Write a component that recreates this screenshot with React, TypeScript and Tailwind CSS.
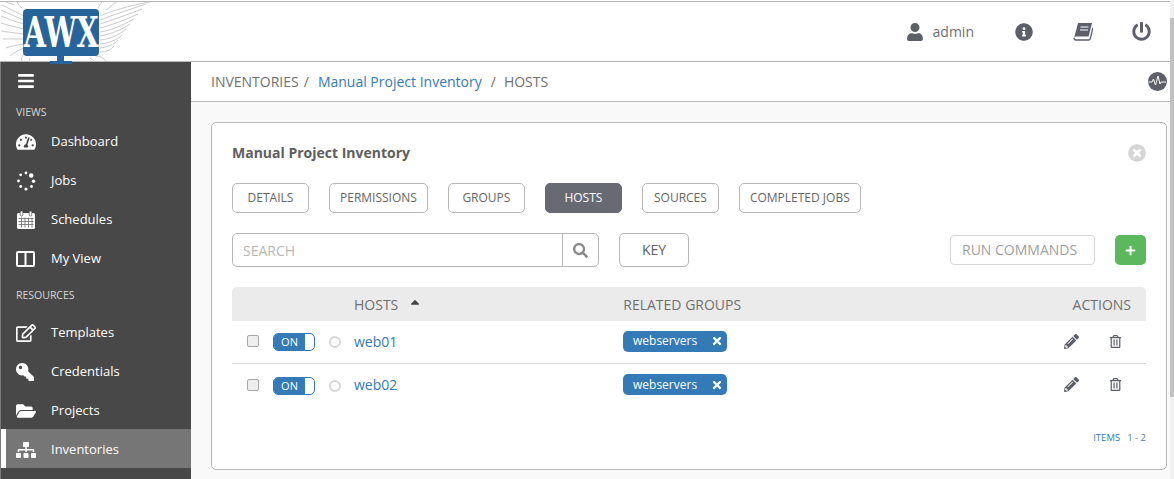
import {
  FaBars,
  FaTachometerAlt,
  FaRegEdit,
  FaKey,
  FaFolderOpen,
  FaSitemap,
  FaUser,
  FaInfoCircle,
  FaPowerOff,
  FaPencilAlt,
  FaRegTrashAlt,
  FaSearch,
  FaTimes,
  FaTimesCircle,
  FaPlus,
  FaCaretUp,
} from 'react-icons/fa';

function JobsIcon() {
  const dots = [
    [4.7, 3.8, 1.4],
    [10, 2, 1.4],
    [15.2, 4.5, 2.3],
    [17.5, 10.2, 1.7],
    [15.5, 15.5, 1.4],
    [10, 18, 1.6],
    [4.7, 15.5, 1.4],
    [2.5, 10, 1.4],
  ];
  return (
    <svg width="20" height="20" viewBox="0 0 20 20" fill="#fff">
      {dots.map(([x, y, r], i) => (
        <circle key={i} cx={x} cy={y} r={r} />
      ))}
    </svg>
  );
}

function CalendarIcon() {
  return (
    <svg width="20" height="20" viewBox="0 0 20 20">
      <rect x="1" y="3" width="18" height="16" rx="1.5" fill="#fff" />
      <rect x="4.2" y="1" width="2.6" height="5" rx="1.2" fill="#fff" stroke="#484848" strokeWidth="0.7" />
      <rect x="13.2" y="1" width="2.6" height="5" rx="1.2" fill="#fff" stroke="#484848" strokeWidth="0.7" />
      <path d="M2.5 8.5h15M2.5 11.5h15M2.5 14.5h15M5.5 7.5v10M9 7.5v10M12.5 7.5v10M16 7.5v10" stroke="#6a6a6a" strokeWidth="0.8" />
    </svg>
  );
}

function ViewIcon() {
  return (
    <svg width="19" height="16" viewBox="0 0 19 16" fill="none" stroke="#fff" strokeWidth="2">
      <rect x="1" y="1" width="17" height="14" rx="1" />
      <path d="M9.5 1v14" />
    </svg>
  );
}

function BookIcon() {
  return (
    <svg width="20" height="19" viewBox="0 0 20 19">
      <path d="M5 1h14l-3.4 13.5H2.4L1.2 15.7 5 1z" fill="#5e6069" />
      <path d="M1 15.8C1 17.4 2 18 3 18h12.5c1 0 1.6-.6 1.9-1.5L19.8 6" fill="none" stroke="#5e6069" strokeWidth="1.3" />
      <path d="M7.5 5h8M7 8h8" stroke="#fff" strokeWidth="1.1" />
    </svg>
  );
}

function PulseIcon() {
  return (
    <svg width="19" height="19" viewBox="0 0 19 19">
      <circle cx="9.5" cy="9.5" r="9.5" fill="#5e6069" />
      <path d="M0.5 10h3.5l1.5-3 2 6 2.5-9 2 8 1.2-2h5" fill="none" stroke="#fff" strokeWidth="1" />
    </svg>
  );
}

function Logo() {
  return (
    <div className="absolute left-0 top-[2px] w-[152px] h-[64px] overflow-hidden">
      <svg className="absolute left-0 top-0" width="152" height="60" viewBox="0 0 152 60" fill="none" stroke="#cbcbcb" strokeWidth="1">
        <path d="M24 14C16 10 8 6 2 3M24 18C16 15 8 11 1 8M24 22C16 20 8 17 1 14M24 27C15 25 7 23 1 21M24 32C15 31 8 30 1 29M24 37C16 37 9 37 3 37M24 42C18 43 11 44 6 46M24 46C19 48 13 51 10 54M22 6C19 4 18 2 17 0M14 3C11 2 9 1 6 0M24 52C22 54 21 56 22 59M30 56C29 57 29 58 30 60" />
        <path d="M100 14C112 9 127 4 150 0M100 18C113 13 128 8 146 2M100 22C112 18 127 13 142 7M100 26C112 23 125 18 138 12M100 30C112 28 123 23 134 17M100 34C111 32 121 28 130 22M100 38C110 37 119 33 126 27M100 42C109 41 117 38 122 33M100 46C107 45 114 43 118 38M100 50C106 50 111 48 114 44M98 6C99 4 100 2 102 0M106 8C110 5 112 3 116 0M96 54C100 54 104 56 106 59M90 56C92 57 94 58 94 60" />
      </svg>
      <div className="absolute left-[23px] top-[7px] w-[76px] h-[47px] bg-[#26649b] rounded-[4px] flex items-center justify-center overflow-hidden">
        <span className="font-['DejaVu_Serif'] font-bold text-white text-[42px] leading-none scale-x-[0.68] whitespace-nowrap">AWX</span>
      </div>
      <div className="absolute left-[57px] top-[54px] w-[7px] h-[5px] bg-[#26649b]" />
      <div className="absolute left-[50px] top-[59px] w-[22px] h-[3px] bg-[#26649b]" />
    </div>
  );
}

function NavItem({ label, icon, active, low }: { label: string; icon: React.ReactNode; active?: boolean; low?: boolean }) {
  return (
    <div className={`h-[39px] flex items-center text-[13px] text-white ${low ? 'pt-[2px]' : ''} ${active ? 'bg-[#767676] border-l-[5px] border-white pl-[10px]' : 'pl-[15px]'}`}>
      <span className="w-[35px] flex items-center text-[20px] shrink-0">{icon}</span>
      <span>{label}</span>
    </div>
  );
}

function Tab({ label, active }: { label: string; active?: boolean }) {
  return (
    <div className={`h-[30px] min-w-[77px] justify-center px-[10px] flex items-center rounded-[5px] border text-[12px] ${active ? 'bg-[#676a73] border-[#676a73] text-white' : 'bg-white border-[#b7b7b7] text-[#666666]'}`}>
      {label}
    </div>
  );
}

function HostRow({ name, last }: { name: string; last?: boolean }) {
  return (
    <div className={`h-[43px] flex items-center ${last ? '' : 'border-b border-[#dcdcdc]'}`}>
      <div className="ml-[15px] w-[12px] h-[12px] rounded-[2px] border border-[#a8a8a8] bg-[#eeeeee] mb-[2px]" />
      <div className="ml-[14px] w-[42px] h-[18px] rounded-[5px] border border-[#337ab7] bg-white flex overflow-hidden">
        <div className="w-[31px] bg-[#337ab7] text-white text-[11px] pt-[1px] flex items-center justify-center">ON</div>
      </div>
      <div className="ml-[14px] w-[12px] h-[12px] rounded-full border-2 border-[#d7d7d7]" />
      <a className="ml-[13px] w-[269px] pb-[2px] text-[14px] text-[#337ab7]">{name}</a>
      <div className="w-[104px] h-[21px] mb-[2px] rounded-[5px] bg-[#337ab7] text-white text-[12px] flex items-center justify-between pl-[10px] pr-[4px]">
        <span>webservers</span>
        <FaTimes size={12} />
      </div>
      <div className="ml-auto mr-[24px] mb-[2px] flex items-center gap-[30px] text-[#5e6069]">
        <FaPencilAlt size={15} />
        <FaRegTrashAlt size={13} />
      </div>
    </div>
  );
}

export default function App() {
  return (
    <div className="relative w-[1174px] h-[479px] overflow-hidden flex bg-white font-['Open_Sans',sans-serif]">
      <div className="flex-1 min-w-0 flex flex-col">
        {/* Top bar */}
        <div className="h-[61px] shrink-0 border-t border-t-[#b7b7b7] mt-[1px] border-b border-b-[#b7b7b7] flex items-center justify-end text-[#5e6069] bg-white">
          <FaUser size={18} />
          <span className="ml-[9px] text-[14px] text-[#707070]">admin</span>
          <span className="ml-[41px]"><FaInfoCircle size={18} /></span>
          <span className="ml-[40px]"><BookIcon /></span>
          <span className="ml-[39px] mr-[19px]"><FaPowerOff size={19} /></span>
        </div>
        <div className="flex-1 min-h-0 flex">
          {/* Sidebar */}
          <div className="w-[191px] shrink-0 bg-[#484848] border-l border-[#7a7a7a] flex flex-col">
            <div className="h-[38px] pl-[16px] flex items-center text-white shrink-0">
              <FaBars size={18} />
            </div>
            <div className="h-[22px] pt-[4px] pl-[15px] flex items-center text-[10.5px] text-[#d7d7d7] shrink-0">VIEWS</div>
            <NavItem label="Dashboard" icon={<FaTachometerAlt />} />
            <NavItem label="Jobs" icon={<JobsIcon />} />
            <NavItem label="Schedules" icon={<CalendarIcon />} />
            <NavItem label="My View" icon={<ViewIcon />} />
            <div className="h-[34px] pt-[2px] pl-[15px] flex items-center text-[10.5px] text-[#d7d7d7] shrink-0">RESOURCES</div>
            <NavItem low label="Templates" icon={<FaRegEdit />} />
            <NavItem low label="Credentials" icon={<FaKey size={18} className="-scale-x-100" />} />
            <NavItem low label="Projects" icon={<FaFolderOpen />} />
            <NavItem low label="Inventories" active icon={<FaSitemap />} />
          </div>
          {/* Main */}
          <div className="flex-1 min-w-0 bg-[#f9f9f9] flex flex-col">
            <div className="h-[40px] shrink-0 bg-white border-b border-[#b7b7b7] pl-[20px] pr-[3px] flex items-center text-[14px] text-[#707070]">
              <span>INVENTORIES</span>
              <span className="ml-[5px]">/</span>
              <a className="ml-[9px] text-[#337ab7]">Manual Project Inventory</a>
              <span className="ml-[9px]">/</span>
              <span className="ml-[8px]">HOSTS</span>
              <span className="ml-auto"><PulseIcon /></span>
            </div>
            <div className="pt-[20px] pl-[20px] pr-[3px]">
              <div className="h-[348px] bg-white border border-[#b7b7b7] rounded-[5px] px-[20px] pt-[20px] relative">
                <div className="flex items-center justify-between h-[20px]">
                  <span className="pb-[2px] text-[14px] font-bold text-[#5e5e5e]">Manual Project Inventory</span>
                  <FaTimesCircle size={18} className="text-[#d5d5d5]" />
                </div>
                <div className="mt-[20px] flex gap-[20px]">
                  <Tab label="DETAILS" />
                  <Tab label="PERMISSIONS" />
                  <Tab label="GROUPS" />
                  <Tab label="HOSTS" active />
                  <Tab label="SOURCES" />
                  <Tab label="COMPLETED JOBS" />
                </div>
                <div className="mt-[20px] flex items-center h-[34px]">
                  <div className="w-[367px] h-[34px] flex border border-[#b7b7b7] rounded-[5px]">
                    <div className="flex-1 pl-[10px] flex items-center text-[14px] text-[#b7b7b7]">SEARCH</div>
                    <div className="w-[36px] border-l border-[#b7b7b7] flex items-center justify-center text-[#8a8a8a]">
                      <FaSearch size={15} />
                    </div>
                  </div>
                  <div className="ml-[20px] w-[70px] h-[34px] pb-[2px] border border-[#b7b7b7] rounded-[5px] flex items-center justify-center text-[14px] text-[#5e6069]">KEY</div>
                  <div className="ml-auto w-[145px] h-[30px] pb-[2px] border border-[#d7d7d7] rounded-[4px] flex items-center pl-[11px] text-[14px] text-[#a0a0a0]">RUN COMMANDS</div>
                  <div className="ml-[20px] w-[31px] h-[30px] bg-[#5cb85c] rounded-[5px] flex items-center justify-center text-white">
                    <FaPlus size={11} />
                  </div>
                </div>
                <div className="mt-[20px] h-[34px] bg-[#ebebeb] rounded-t-[5px] flex items-center text-[14px] text-[#707070]">
                  <span className="ml-[122px]">HOSTS</span>
                  <FaCaretUp size={14} className="ml-[10px] mb-[4px] text-[#444444]" />
                  <span className="ml-[201px]">RELATED GROUPS</span>
                  <span className="ml-auto mr-[15px]">ACTIONS</span>
                </div>
                <HostRow name="web01" />
                <HostRow name="web02" last />
                <div className="mt-[24px] flex justify-end items-center gap-[7px] text-[#337ab7] text-[9.5px]">
                  <span>ITEMS</span>
                  <span className="text-[#5e7a96]">1 - 2</span>
                </div>
              </div>
            </div>
          </div>
        </div>
      </div>
      {/* Scrollbar strip */}
      <div className="w-[4px] shrink-0 bg-[#f1f1f1] pt-[18px]">
        <div className="h-[379px] bg-[#c1c1c1]" />
      </div>
      <Logo />
    </div>
  );
}
